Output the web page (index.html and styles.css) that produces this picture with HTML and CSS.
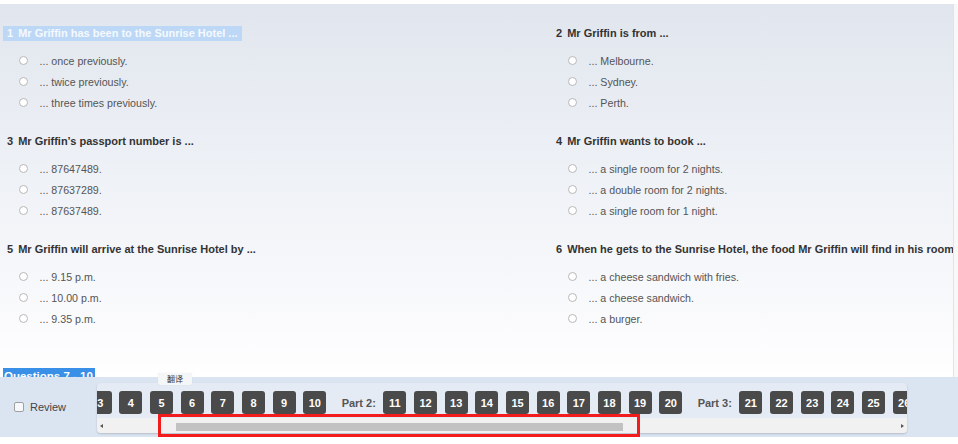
FILE: index.html
```html
<!DOCTYPE html>
<html>
<head>
  <meta charset="UTF-8">
  <title>Listening Test - Part 1</title>
  <link rel="stylesheet" href="styles.css">
</head>
<body>
  <div class="page">
    <div class="top-strip"></div>
    <div class="main">
      <div class="content">
        <div class="questions">
          <div class="question">
            <div class="q-title"><span class="selected"><span class="q-num">1</span>Mr Griffin has been to the Sunrise Hotel ...</span></div>
            <ul class="options">
              <li class="option"><span class="radio"></span>... once previously.</li>
              <li class="option"><span class="radio"></span>... twice previously.</li>
              <li class="option"><span class="radio"></span>... three times previously.</li>
            </ul>
          </div>
          <div class="question">
            <div class="q-title"><span class="q-num">2</span>Mr Griffin is from ...</div>
            <ul class="options">
              <li class="option"><span class="radio"></span>... Melbourne.</li>
              <li class="option"><span class="radio"></span>... Sydney.</li>
              <li class="option"><span class="radio"></span>... Perth.</li>
            </ul>
          </div>
          <div class="question">
            <div class="q-title"><span class="q-num">3</span>Mr Griffin’s passport number is ...</div>
            <ul class="options">
              <li class="option"><span class="radio"></span>... 87647489.</li>
              <li class="option"><span class="radio"></span>... 87637289.</li>
              <li class="option"><span class="radio"></span>... 87637489.</li>
            </ul>
          </div>
          <div class="question">
            <div class="q-title"><span class="q-num">4</span>Mr Griffin wants to book ...</div>
            <ul class="options">
              <li class="option"><span class="radio"></span>... a single room for 2 nights.</li>
              <li class="option"><span class="radio"></span>... a double room for 2 nights.</li>
              <li class="option"><span class="radio"></span>... a single room for 1 night.</li>
            </ul>
          </div>
          <div class="question">
            <div class="q-title"><span class="q-num">5</span>Mr Griffin will arrive at the Sunrise Hotel by ...</div>
            <ul class="options">
              <li class="option"><span class="radio"></span>... 9.15 p.m.</li>
              <li class="option"><span class="radio"></span>... 10.00 p.m.</li>
              <li class="option"><span class="radio"></span>... 9.35 p.m.</li>
            </ul>
          </div>
          <div class="question">
            <div class="q-title"><span class="q-num">6</span>When he gets to the Sunrise Hotel, the food Mr Griffin will find in his room will be ...</div>
            <ul class="options">
              <li class="option"><span class="radio"></span>... a cheese sandwich with fries.</li>
              <li class="option"><span class="radio"></span>... a cheese sandwich.</li>
              <li class="option"><span class="radio"></span>... a burger.</li>
            </ul>
          </div>
        </div>
        <div class="section-title"><span class="section-selected">Questions 7 - 10</span></div>
      </div>
      <div class="vscroll"></div>
    </div>
    <footer class="footer">
      <label class="review"><span class="checkbox"></span>Review</label>
      <div class="nav">
        <div class="nav-track">
          <span class="btn">3</span>
          <span class="btn">4</span>
          <span class="btn">5</span>
          <span class="btn">6</span>
          <span class="btn">7</span>
          <span class="btn">8</span>
          <span class="btn">9</span>
          <span class="btn">10</span>
          <span class="part-label">Part 2:</span>
          <span class="btn">11</span>
          <span class="btn">12</span>
          <span class="btn">13</span>
          <span class="btn">14</span>
          <span class="btn">15</span>
          <span class="btn">16</span>
          <span class="btn">17</span>
          <span class="btn">18</span>
          <span class="btn">19</span>
          <span class="btn">20</span>
          <span class="part-label">Part 3:</span>
          <span class="btn">21</span>
          <span class="btn">22</span>
          <span class="btn">23</span>
          <span class="btn">24</span>
          <span class="btn">25</span>
          <span class="btn">26</span>
          <span class="btn">27</span>
        </div>
        <div class="hscroll">
          <span class="arrow-left"></span>
          <span class="thumb"></span>
          <span class="arrow-right"></span>
        </div>
      </div>
    </footer>
    <div class="bottom-strip"></div>
    <div class="tooltip">翻译</div>
    <div class="annotation"></div>
  </div>
</body>
</html>
```
FILE: styles.css
```css
body {
  margin: 0;
  padding: 0;
  font-family: "Liberation Sans", Arial, sans-serif;
  background-color: #fff;
}

.page {
  position: relative;
  width: 958px;
  height: 444px;
  overflow: hidden;
  display: flex;
  flex-direction: column;
}

.top-strip {
  height: 4px;
  background-color: #fff;
}

.main {
  display: flex;
  height: 373px;
}

.content {
  flex: 1;
  overflow: hidden;
  padding-top: 21px;
  background: linear-gradient(to bottom, #e1e6ee 0%, #eef1f6 45%, #fdfdfe 95%, #fff 100%);
}

.vscroll {
  width: 4px;
  background-color: #f8f8f8;
  border-left: 1px solid #e3e3e3;
}

.questions {
  display: grid;
  grid-template-columns: 549px 549px;
  padding-left: 3px;
}

.question {
  padding-left: 4px;
  padding-bottom: 20px;
}

.q-title {
  font-size: 11px;
  font-weight: bold;
  line-height: 16px;
  height: 16px;
  color: #333;
  white-space: nowrap;
  margin-bottom: 9px;
}

.q-num {
  margin-right: 5px;
}

.selected {
  display: inline-block;
  line-height: 15px;
  margin-left: -4px;
  padding: 0 4px;
  background-color: #bcd8f6;
  color: #f5f9fd;
}

.options {
  list-style: none;
  margin: 0;
  padding-left: 11.5px;
}

.option {
  display: flex;
  align-items: center;
  height: 21px;
  font-size: 10.667px;
  color: #555;
  white-space: nowrap;
}

.radio {
  width: 7px;
  height: 7px;
  border: 1px solid #b8b8b8;
  border-radius: 50%;
  background-color: #fff;
  margin-right: 12px;
}

.section-title {
  margin-top: 17px;
  padding-left: 3px;
}

.section-selected {
  display: inline-block;
  line-height: 16px;
  padding: 0 2px 0 1px;
  font-size: 11.5px;
  font-weight: bold;
  background-color: #3a8fe6;
  color: #fff;
}

.footer {
  height: 60px;
  display: flex;
  align-items: flex-start;
  padding-top: 6px;
  box-sizing: border-box;
  background-color: #dbe4f1;
}

.bottom-strip {
  height: 7px;
  background-color: #fff;
}

.review {
  align-self: center;
  display: flex;
  align-items: center;
  width: 96.7px;
  padding-left: 14px;
  box-sizing: border-box;
  font-size: 11px;
  color: #444;
  margin-top: -6px;
}

.checkbox {
  width: 8px;
  height: 8px;
  border: 1px solid #a0a0a0;
  border-radius: 2px;
  background-color: #f6f8fb;
  margin-right: 6px;
}

.nav {
  width: 810px;
  height: 50px;
  overflow: hidden;
  border-radius: 4px;
  background-color: #e5ebf5;
  box-shadow: 0 1px 2px rgba(0, 0, 0, 0.18);
}

.nav-track {
  display: flex;
  align-items: center;
  margin-top: 8px;
  margin-left: -8px;
  height: 23px;
  white-space: nowrap;
}

.btn {
  flex-shrink: 0;
  display: flex;
  align-items: center;
  justify-content: center;
  width: 23px;
  height: 23px;
  margin-right: 7.67px;
  border-radius: 3px;
  background-color: #4a4a4a;
  color: #fff;
  font-size: 11px;
  font-weight: bold;
}

.part-label {
  flex-shrink: 0;
  margin: 0 7.5px 0 7.7px;
  font-size: 11px;
  font-weight: bold;
  color: #555;
}

.hscroll {
  display: flex;
  align-items: center;
  height: 15px;
  margin-top: 4px;
  background-color: #f1f1f1;
}

.arrow-left {
  width: 0;
  height: 0;
  margin-left: 3px;
  border-top: 2.5px solid transparent;
  border-bottom: 2.5px solid transparent;
  border-right: 3px solid #555;
}

.arrow-right {
  width: 0;
  height: 0;
  margin-left: auto;
  margin-right: 3px;
  border-top: 2.5px solid transparent;
  border-bottom: 2.5px solid transparent;
  border-left: 3px solid #555;
}

.thumb {
  width: 447.6px;
  height: 8px;
  margin-left: 73px;
  margin-top: 2px;
  background-color: #c2c2c2;
}

.tooltip {
  position: absolute;
  left: 158px;
  top: 373px;
  width: 34px;
  height: 12px;
  line-height: 12px;
  text-align: center;
  font-family: "Noto Sans CJK SC", sans-serif;
  font-size: 8px;
  color: #333;
  background-color: #f5f6f8;
  border-radius: 2px;
  box-shadow: 0 0 1px rgba(0, 0, 0, 0.15);
}

.annotation {
  position: absolute;
  left: 158px;
  top: 414px;
  width: 482px;
  height: 23px;
  box-sizing: border-box;
  border: 3px solid #f21c1c;
}
```
